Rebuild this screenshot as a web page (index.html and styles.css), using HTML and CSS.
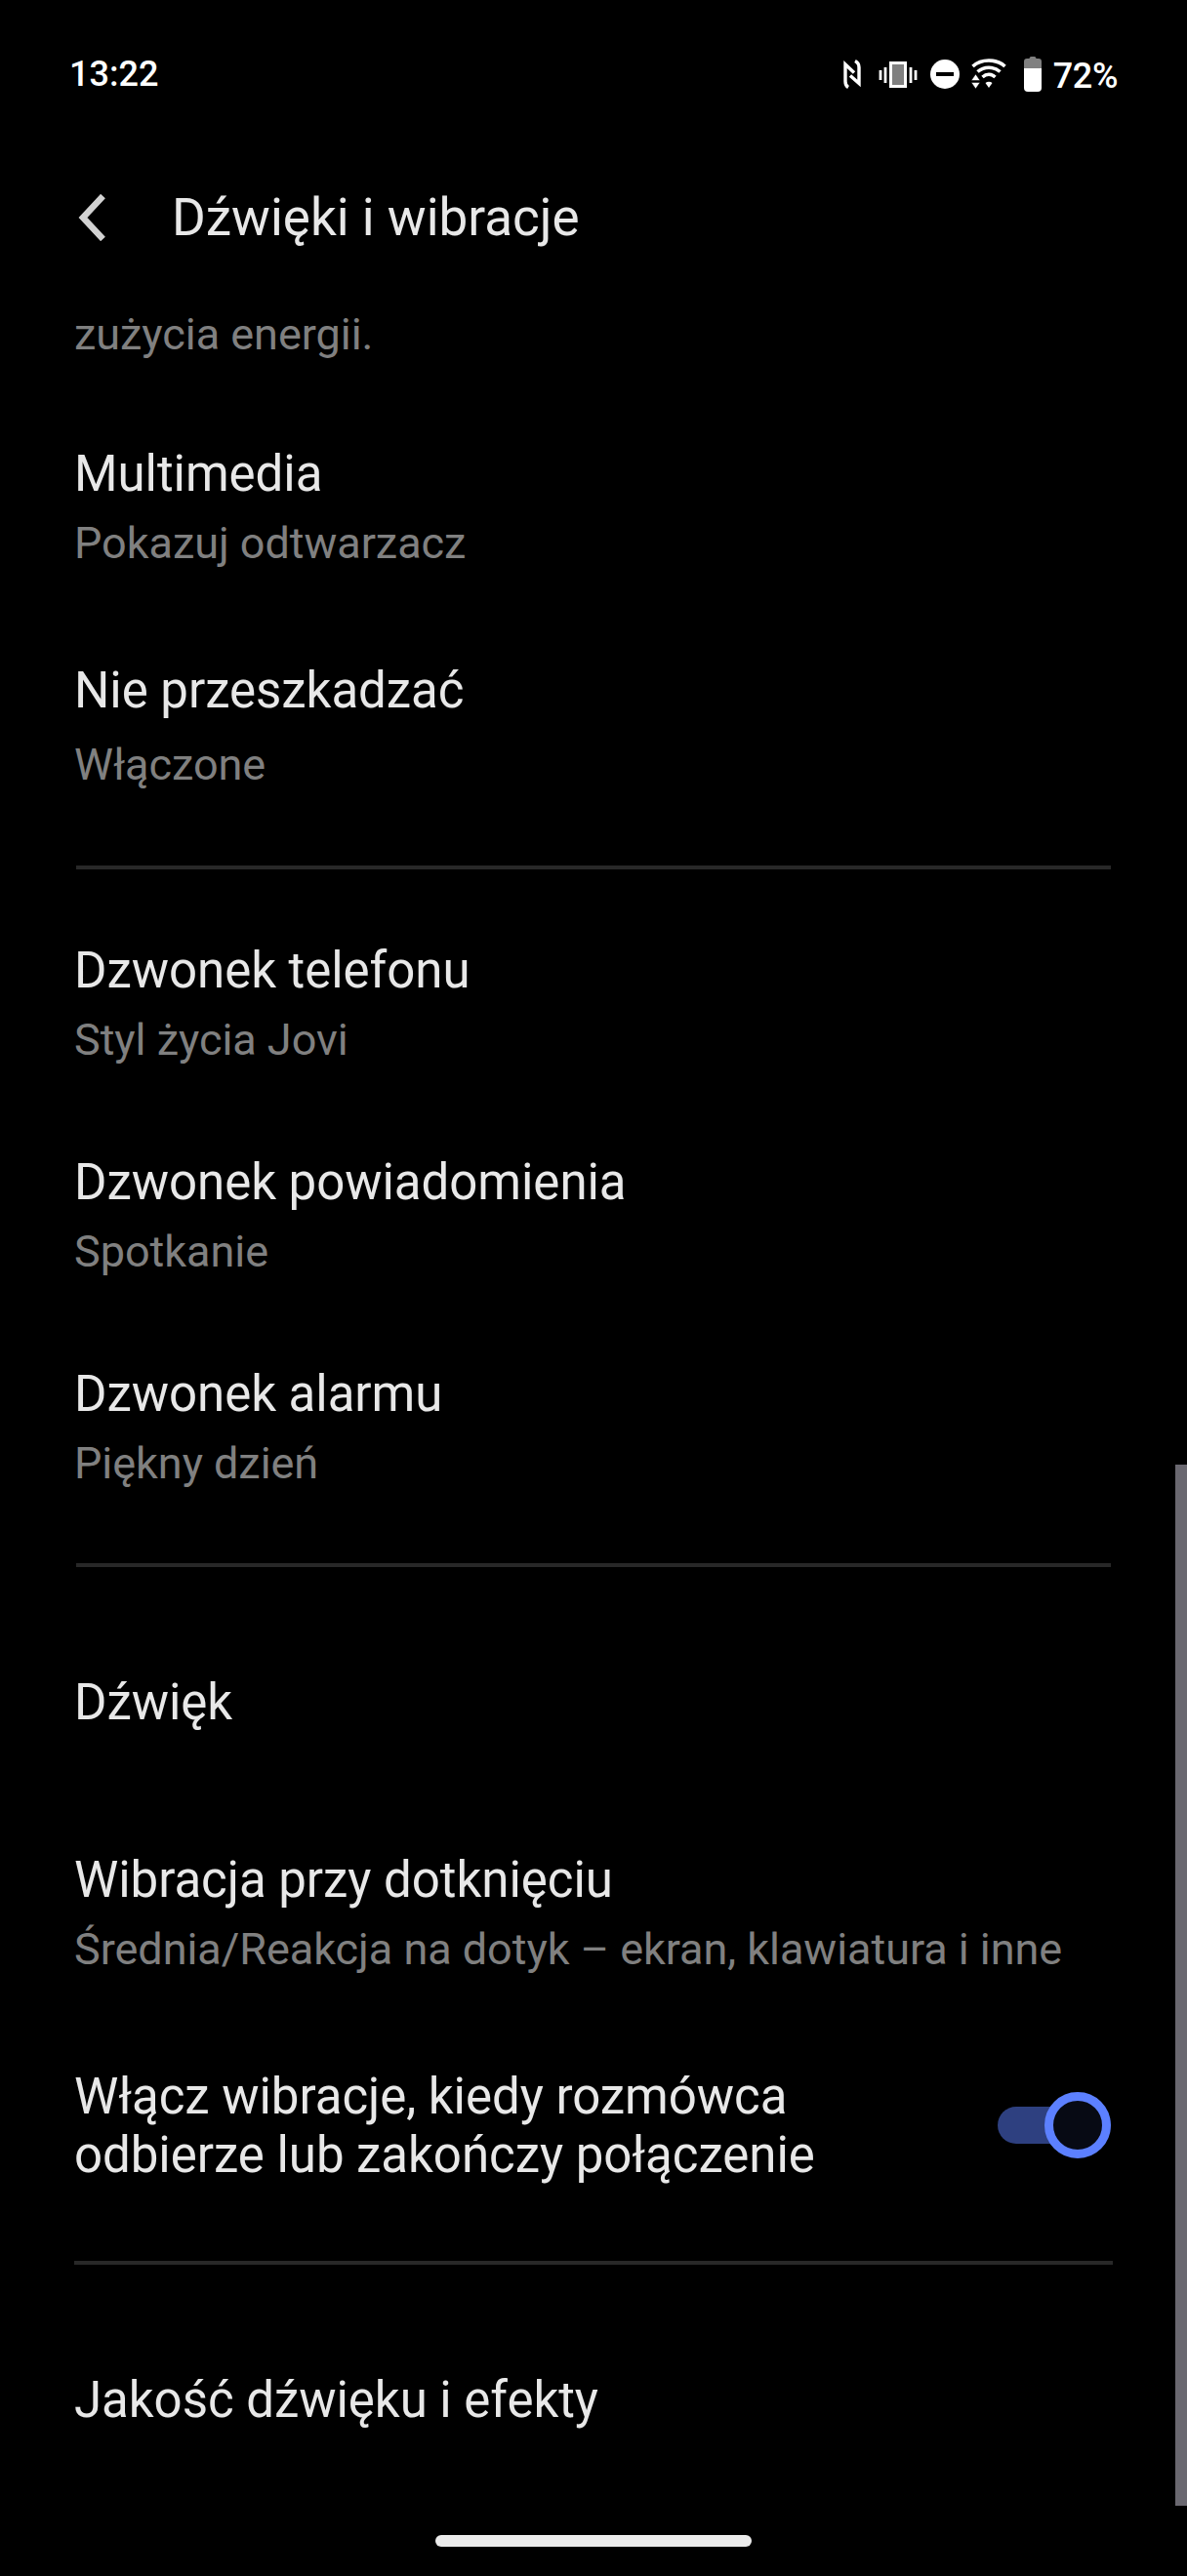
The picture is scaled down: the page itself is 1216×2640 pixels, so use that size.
FILE: index.html
```
<!DOCTYPE html>
<html lang="pl">
<head>
    <meta charset="UTF-8">
    <meta name="viewport" content="width=device-width, initial-scale=1.0">
    <title>Dźwięki i wibracje</title>
    <link rel="stylesheet" href="styles.css">
</head>
<body>

    <div class="screen">
        <!-- Status bar -->
        <div class="status-bar">
            <span class="clock">13:22</span>
            <div class="status-icons">
                <svg class="icon-nfc" width="20" height="32" viewBox="0 0 20 32" fill="none" stroke="#fff" stroke-width="3.400">
                    <path d="M7 29.500C4.500 28 4 26 4 23.500V6L13 14.500"/>
                    <path d="M14 2.500C17 4 18 6 18 9V25.500L9 17.500"/>
                </svg>
                <svg class="icon-vibrate" width="40" height="30" viewBox="0 0 40 30">
                    <rect x="12.500" y="2.500" width="15" height="24" fill="#808080" stroke="#fff" stroke-width="3"/>
                    <path d="M2 10v10M7 7v16M33 7v16M38 10v10" stroke="#fff" stroke-width="2.800"/>
                </svg>
                <svg class="icon-dnd" width="30" height="30" viewBox="0 0 30 30">
                    <circle cx="15" cy="15" r="15" fill="#fff"/>
                    <rect x="6" y="13" width="18" height="4" fill="#000"/>
                </svg>
                <svg class="icon-wifi" width="36" height="31" viewBox="0 0 36 31">
                    <g fill="none" stroke="#fff" stroke-width="3.600">
                        <path d="M1.500 8C10.500 0 25.500 0 34.500 8"/>
                        <path d="M6.500 13.500C13 7.800 23 7.800 29.500 13.500"/>
                        <path d="M11.500 19C15.500 15.500 20.500 15.500 24.500 19"/>
                    </g>
                    <path d="M18 30l-3.500-5c2-1.800 5-1.800 7 0z" fill="#fff"/>
                    <path d="M0 22.500l4.500-6.500 4.500 6.500zM0 24.500h9L4.500 31z" fill="#fff" stroke="#000" stroke-width=".5"/>
                </svg>
                <svg class="icon-battery" width="18" height="36" viewBox="0 0 18 36">
                    <path d="M0 12V5q0-3 3-3h2.500q0-2 2-2h3q2 0 2 2H15q3 0 3 3v7z" fill="#808080"/>
                    <path d="M0 12h18v20q0 4-4 4H4q-4 0-4-4z" fill="#fff"/>
                </svg>
                <span class="battery-level">72%</span>
            </div>
        </div>

        <!-- Header -->
        <div class="header">
            <svg class="back" width="28" height="48" viewBox="0 0 28 48" fill="none" stroke="#d2d2d2" stroke-width="6.500">
                <path d="M25.500 2L5 24L25.500 46"/>
            </svg>
            <h1>Dźwięki i wibracje</h1>
        </div>

        <!-- Settings list -->
        <div class="list">
            <p class="summary">zużycia energii.</p>

            <div class="item first">
                <h2>Multimedia</h2>
                <p class="summary">Pokazuj odtwarzacz</p>
            </div>
            <div class="item dnd">
                <h2>Nie przeszkadzać</h2>
                <p class="summary">Włączone</p>
            </div>

            <hr>

            <div class="item">
                <h2>Dzwonek telefonu</h2>
                <p class="summary">Styl życia Jovi</p>
            </div>
            <div class="item">
                <h2>Dzwonek powiadomienia</h2>
                <p class="summary">Spotkanie</p>
            </div>
            <div class="item">
                <h2>Dzwonek alarmu</h2>
                <p class="summary">Piękny dzień</p>
            </div>

            <hr>

            <div class="item single">
                <h2>Dźwięk</h2>
            </div>
            <div class="item">
                <h2>Wibracja przy dotknięciu</h2>
                <p class="summary">Średnia/Reakcja na dotyk – ekran, klawiatura i inne</p>
            </div>
            <div class="item with-switch">
                <h2>Włącz wibracje, kiedy rozmówca<br>odbierze lub zakończy połączenie</h2>
                <div class="switch">
                    <div class="thumb"></div>
                </div>
            </div>

            <hr class="wide">

            <div class="item single">
                <h2>Jakość dźwięku i efekty</h2>
            </div>
        </div>

        <div class="scrollbar"></div>
        <div class="nav-handle"></div>
    </div>

</body>
</html>
```

FILE: styles.css
```
* {
    box-sizing: border-box;
    margin: 0;
    padding: 0;
}

body {
    background: #000;
    color: #e8e8e8;
    font-family: Roboto, sans-serif;
}

.screen {
    position: relative;
    height: 2640px;
    overflow: hidden;
}

.status-bar {
    display: flex;
    justify-content: space-between;
    height: 150px;
    padding: 52px 71px 0 71px;
    color: #fff;
    font-size: 36px;
    font-weight: 500;
    line-height: 48px;
}

.status-icons {
    display: flex;
    align-items: flex-start;
}

.icon-nfc {
    margin-top: 8px;
}

.icon-vibrate {
    margin: 10px 0 0 18px;
}

.icon-dnd {
    margin: 9px 0 0 13px;
}

.icon-wifi {
    margin: 8px 0 0 12px;
}

.icon-battery {
    margin: 6px 0 0 18px;
}

.battery-level {
    margin: 2px 0 0 12px;
    letter-spacing: -0.4px;
}

.header {
    display: flex;
    align-items: center;
    height: 146px;
    padding-left: 80px;
}

.header h1 {
    margin-left: 68px;
    font-size: 53px;
    font-weight: 400;
    line-height: 64px;
}

.list {
    padding: 20px 78px 0 76px;
}

h2 {
    font-size: 51px;
    font-weight: 400;
    line-height: 60px;
    letter-spacing: -0.04px;
}

.summary {
    color: #808080;
    font-size: 45px;
    line-height: 54px;
    letter-spacing: -0.04px;
}

.item {
    padding: 44px 0 45px;
}

.item .summary {
    margin-top: 14px;
}

.item.first {
    padding-top: 86px;
}

.item.dnd {
    padding: 49px 0 46px;
}

.item.dnd .summary {
    margin-top: 19px;
}

.item.single {
    padding: 79px 0 78px;
}

.item.with-switch {
    display: flex;
    align-items: center;
    justify-content: space-between;
    padding: 49px 0;
}

.with-switch h2 {
    line-height: 59.5px;
}

hr {
    height: 4px;
    margin: 30px 0 30px 2px;
    border: none;
    background: #282828;
}

hr.wide {
    margin: 30px -2px 30px 0;
}

.switch {
    position: relative;
    width: 116px;
    height: 38px;
    margin-bottom: 2px;
    border-radius: 19px;
    background: #2e4080;
}

.thumb {
    position: absolute;
    top: -15px;
    right: 0;
    width: 68px;
    height: 68px;
    border: 9px solid #5c80ff;
    border-radius: 50%;
    background: #070a14;
}

.scrollbar {
    position: absolute;
    top: 1501px;
    right: 0;
    width: 12px;
    height: 1067px;
    background: #6a6870;
}

.nav-handle {
    position: absolute;
    bottom: 30px;
    left: 446px;
    width: 324px;
    height: 12px;
    border-radius: 6px;
    background: #ebebeb;
}
```
